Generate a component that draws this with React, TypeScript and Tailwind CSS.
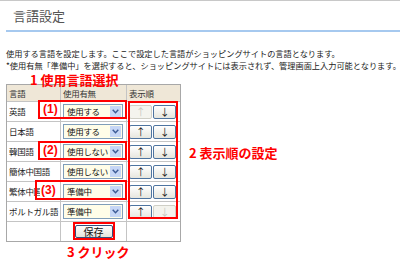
import React from "react";

type Row = { lang: string; sel: string; upDis?: boolean; downDis?: boolean };

const rows: Row[] = [
  { lang: "英語", sel: "使用する", upDis: true },
  { lang: "日本語", sel: "使用する" },
  { lang: "韓国語", sel: "使用しない" },
  { lang: "簡体中国語", sel: "使用しない" },
  { lang: "繁体中国語", sel: "準備中" },
  { lang: "ポルトガル語", sel: "準備中", downDis: true },
];

function Select({ value }: { value: string }) {
  return (
    <div className="flex h-[15px] w-[60px] items-center justify-between border border-[#7f9db9] bg-[#fffde8] pl-[3px] pr-[1px]">
      <span className="whitespace-nowrap text-[8.5px] leading-none tracking-[-0.3px] text-[#111]">{value}</span>
      <span className="flex h-[11px] w-[11px] shrink-0 items-center justify-center bg-[#c6d6f6]">
        <svg width="7" height="5" viewBox="0 0 7 5">
          <path d="M0.7 0.8 L3.5 3.8 L6.3 0.8" stroke="#3c5a96" strokeWidth="1.4" fill="none" />
        </svg>
      </span>
    </div>
  );
}

function ArrowBtn({ up, disabled }: { up: boolean; disabled?: boolean }) {
  return (
    <div
      className={
        disabled
          ? "flex h-[14px] w-[23px] items-center justify-center rounded-[2px] border border-[#cfcfc6] bg-[#f4f4ee] text-[10px] leading-none text-[#c8c8c0]"
          : "flex h-[14px] w-[23px] items-center justify-center rounded-[2px] border border-[#4e74a0] bg-gradient-to-b from-[#ffffff] to-[#e6e6de] text-[10px] leading-none text-[#222]"
      }
    >
      {up ? "↑" : "↓"}
    </div>
  );
}

export default function App() {
  return (
    <div className="relative h-[268px] w-[400px] overflow-hidden bg-white font-['Noto_Sans_CJK_JP',sans-serif] text-[#222]">
      <div className="border-t border-[#c8c8c8]" />
      <div className="h-[29px] pl-[13px] pt-[7px] text-[13px] leading-[16px] text-[#555]">言語設定</div>
      <div className="ml-[6px] h-[2px] bg-[#a6c9ef]" />
      <div className="mt-[15px] whitespace-nowrap pl-[6px] text-[8.2px] leading-[12px] text-[#222]">
        <div>使用する言語を設定します。ここで設定した言語がショッピングサイトの言語となります。</div>
        <div>*使用有無「準備中」を選択すると、ショッピングサイトには表示されず、管理画面上入力可能となります。</div>
      </div>

      <div className="ml-[6px] mt-[13px] w-[175px] border border-[#a8a8a8] text-[8.5px] tracking-[-0.3px]">
        <div className="flex h-[17px] border-b border-[#c4c4c4] bg-[#efe7d7] text-[#333]">
          <div className="flex w-[54px] items-center border-r border-[#c4c4c4] pl-[2px]">言語</div>
          <div className="flex w-[66px] items-center border-r border-[#c4c4c4] pl-[2px]">使用有無</div>
          <div className="flex flex-1 items-center pl-[2px]">表示順</div>
        </div>
        {rows.map((r, i) => (
          <div key={i} className="flex h-[20px] border-b border-[#c4c4c4]">
            <div className="flex w-[54px] items-center overflow-hidden whitespace-nowrap border-r border-[#c4c4c4] pl-[2px] text-[#222]">
              {r.lang}
            </div>
            <div className="flex w-[66px] items-center border-r border-[#c4c4c4] pl-[2px]">
              <Select value={r.sel} />
            </div>
            <div className="flex flex-1 items-center gap-[1px] pl-[2px]">
              <ArrowBtn up disabled={r.upDis} />
              <ArrowBtn up={false} disabled={r.downDis} />
            </div>
          </div>
        ))}
        <div className="flex h-[19px]">
          <div className="w-[54px] border-r border-[#c4c4c4]" />
          <div className="flex w-[66px] items-center justify-center border-r border-[#c4c4c4]">
            <div className="flex h-[13px] w-[38px] items-center justify-center rounded-[2px] border border-[#34507c] bg-gradient-to-b from-[#ffffff] to-[#e4e4dc] text-[10px] leading-none tracking-normal text-[#111]">
              保存
            </div>
          </div>
          <div className="flex-1" />
        </div>
      </div>

      {/* annotations */}
      <div className="absolute left-[30px] top-[74px] whitespace-nowrap text-[13px] font-bold leading-[11px] text-[#ff0000]">1 使用言語選択</div>
      <div className="absolute left-[38px] top-[100px] h-[19px] w-[89px] border-2 border-[#ff0000]" />
      <div className="absolute left-[42px] top-[103px] bg-white px-[1px] font-['Liberation_Sans',sans-serif] text-[12px] font-bold leading-[13px] text-[#ff0000]">(1)</div>
      <div className="absolute left-[38px] top-[141px] h-[19px] w-[89px] border-2 border-[#ff0000]" />
      <div className="absolute left-[42px] top-[144px] bg-white px-[1px] font-['Liberation_Sans',sans-serif] text-[12px] font-bold leading-[13px] text-[#ff0000]">(2)</div>
      <div className="absolute left-[35px] top-[180px] h-[20px] w-[92px] border-2 border-[#ff0000]" />
      <div className="absolute left-[40px] top-[184px] bg-white px-[1px] font-['Liberation_Sans',sans-serif] text-[12px] font-bold leading-[13px] text-[#ff0000]">(3)</div>
      <div className="absolute left-[128px] top-[101px] h-[118px] w-[50px] border-2 border-[#ff0000]" />
      <div className="absolute left-[189px] top-[145px] whitespace-nowrap text-[13px] font-bold leading-[16px] text-[#ff0000]">2 表示順の設定</div>
      <div className="absolute left-[73px] top-[222px] h-[18px] w-[42px] border-2 border-[#ff0000]" />
      <div className="absolute left-[67px] top-[244px] whitespace-nowrap text-[13px] font-bold leading-[16px] text-[#ff0000]">3 クリック</div>
    </div>
  );
}
